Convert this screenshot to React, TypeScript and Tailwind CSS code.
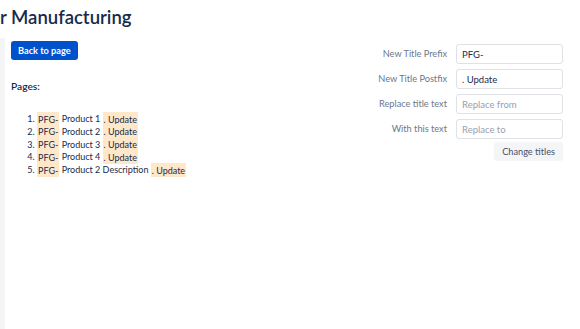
import React from "react";

const prefix = "PFG-";
const postfix = ". Update";
const pages = ["Product 1", "Product 2", "Product 3", "Product 4", "Product 2 Description"];

const fields = [
  { label: "New Title Prefix", value: "PFG-", placeholder: "" },
  { label: "New Title Postfix", value: ". Update", placeholder: "" },
  { label: "Replace title text", value: "", placeholder: "Replace from" },
  { label: "With this text", value: "", placeholder: "Replace to" },
];

const Mark = ({ children }: { children: React.ReactNode }) => (
  <span className="bg-[#ffe7c9] px-[1px] py-[1.5px]">{children}</span>
);

const App = () => {
  return (
    <div className="w-[580px] h-[329px] bg-white overflow-hidden flex flex-col text-[#172b4d]" style={{ fontFamily: 'Lato, "Liberation Sans", sans-serif' }}>
      <h1 className="h-[38px] pt-[6px] text-[18.5px] leading-[22px] font-semibold text-[#172b4d] whitespace-nowrap">r Manufacturing</h1>
      <div className="flex-1 flex flex-row">
        <div className="w-[5px] bg-[#f4f5f7]" />
        <div className="flex-1 flex flex-row justify-between pl-[6px] pr-[17px] pt-[3px]">
          <div className="flex flex-col">
            <button className="self-start h-[19px] px-[7px] rounded-[3px] bg-[#0052cc] text-white text-[9.2px] font-bold leading-[19px]">
              Back to page
            </button>
            <div className="mt-[19px] text-[10.2px] leading-[14px] font-semibold text-[#172b4d]">Pages:</div>
            <ol className="mt-[20px] pl-[26px] list-decimal text-[9px] leading-[12.75px] text-[#172b4d]">
              {pages.map((p, i) => (
                <li key={i}>
                  <Mark>{prefix}</Mark> {p} <Mark>{postfix}</Mark>
                </li>
              ))}
            </ol>
          </div>
          <div className="flex flex-col items-end pt-[3px]">
            <div className="flex flex-col gap-[5px]">
              {fields.map((f) => (
                <div key={f.label} className="flex flex-row items-center gap-[9px]">
                  <label className="w-[90px] text-right text-[9.2px] text-[#6b778c]">{f.label}</label>
                  <input
                    className="w-[107px] h-[20px] border border-[#dfe1e6] rounded-[3px] px-[5px] text-[9.5px] text-[#172b4d] placeholder:text-[#97a0af] outline-none"
                    defaultValue={f.value}
                    placeholder={f.placeholder}
                  />
                </div>
              ))}
            </div>
            <button className="mt-[3px] h-[19px] px-[8px] rounded-[3px] bg-[#f4f5f7] text-[#42526e] text-[9.2px] leading-[19px]">
              Change titles
            </button>
          </div>
        </div>
      </div>
    </div>
  );
};

export default App;
